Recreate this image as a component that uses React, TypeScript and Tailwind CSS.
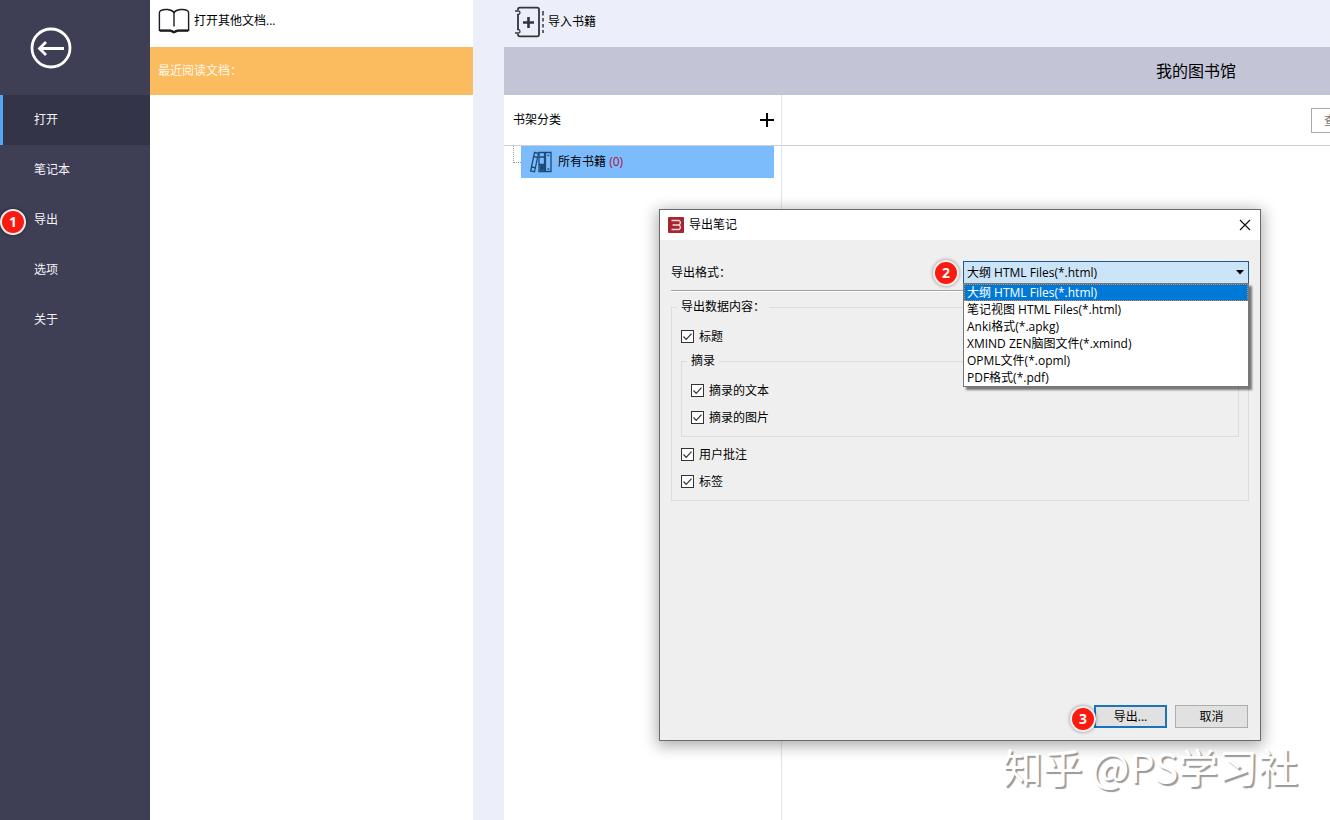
import React, { FC, useState } from "react";
import clsx from "clsx";

interface CheckRowProps {
  id: string;
  label: string;
}

interface StepBadgeProps {
  step: number;
  className: string;
}

const menuItems = ["打开", "笔记本", "导出", "选项", "关于"];

const formats = [
  "大纲 HTML Files(*.html)",
  "笔记视图 HTML Files(*.html)",
  "Anki格式(*.apkg)",
  "XMIND ZEN脑图文件(*.xmind)",
  "OPML文件(*.opml)",
  "PDF格式(*.pdf)",
];

const StepBadge: FC<StepBadgeProps> = ({ step, className }) => (
  <span
    className={clsx(
      "absolute flex h-[26px] w-[26px] items-center justify-center rounded-full border-2 border-[#fbeeee] bg-[#fb1a10] text-sm font-bold text-white shadow-[0_0_3px_1px_rgba(0,0,0,0.25)]",
      className
    )}
  >
    {step}
  </span>
);

const CheckRow: FC<CheckRowProps> = ({ id, label }) => (
  <div className="flex h-[27px] items-center">
    <span className="relative flex">
      <input
        id={id}
        type="checkbox"
        defaultChecked
        className="peer h-[13px] w-[13px] appearance-none border border-[#333] bg-white"
      />
      <svg
        viewBox="0 0 13 13"
        className="pointer-events-none absolute inset-0 hidden h-[13px] w-[13px] peer-checked:block"
        fill="none"
        stroke="#333"
        strokeWidth="1.2"
      >
        <path d="M2.5 6.5l2.7 2.8 5.3-5.6" />
      </svg>
    </span>
    <label htmlFor={id} className="pl-[5px]">
      {label}
    </label>
  </div>
);

const Sidebar: FC = () => {
  const [active, setActive] = useState("打开");
  return (
    <nav className="relative w-[150px] shrink-0 bg-[#3e3e55] text-[#f4f4f8]">
      <div className="flex h-[95px] items-center pl-[30px]">
        <button type="button" aria-label="返回">
          <svg
            width="42"
            height="42"
            viewBox="0 0 42 42"
            fill="none"
            stroke="#fff"
            strokeWidth="2.8"
          >
            <circle cx="21" cy="21" r="19" />
            <path d="M34 21.5H10M16 15l-6.5 6.5L16 28" />
          </svg>
        </button>
      </div>
      {menuItems.map((item) => (
        <button
          key={item}
          type="button"
          onClick={() => setActive(item)}
          className={clsx(
            "flex h-[50px] w-full items-center border-l-[3px] pl-[31px]",
            item === active
              ? "border-[#56a5f7] bg-[#333447]"
              : "border-transparent"
          )}
        >
          {item}
        </button>
      ))}
      <StepBadge step={1} className="left-0 top-[209px]" />
    </nav>
  );
};

const RecentPanel: FC = () => (
  <section className="w-[323px] shrink-0 bg-white">
    <button type="button" className="flex h-[47px] items-center pb-[6px] pl-2">
      <svg
        width="32"
        height="26"
        viewBox="0 0 32 26"
        fill="none"
        stroke="#1c1c1c"
        strokeWidth="1.4"
      >
        <path d="M16 4.5C13.5 1 6 .8 2.6 2.6 1.5 3.2 1.4 4 1.4 5v17.5h10.2c2 0 3 .3 4.4 1.4 1.400-1.100 2.400-1.400 4.400-1.400h10.200V5c0-1-.1-1.800-1.200-2.400C26 .8 18.500 1 16 4.500z" />
        <path d="M16 4.500v14" />
        <path d="M2 22.700h10.500l3.500 1.600 3.500-1.600H30" strokeWidth="2.200" />
      </svg>
      <span className="pl-1">打开其他文档...</span>
    </button>
    <h2 className="flex h-12 items-center bg-[#fbbc60] pl-2 text-[#fff8ea]">
      最近阅读文档：
    </h2>
  </section>
);

const BookshelfTree: FC = () => (
  <aside className="flex w-[278px] shrink-0 flex-col border-r border-[#e4e4e8]">
    <div className="flex h-[51px] items-center justify-between border-b border-[#cfcfd3] pl-[9px] pr-[7px]">
      <h2>书架分类</h2>
      <button type="button" aria-label="添加分类">
        <svg width="14" height="14" viewBox="0 0 14 14" stroke="#000" strokeWidth="2">
          <path d="M7 0v14M0 7h14" />
        </svg>
      </button>
    </div>
    <div className="flex pl-[9px] pr-[7px]">
      <span className="h-[17px] w-2 border-b border-l border-dotted border-[#9a9a9a]" />
      <a href="#all" className="flex h-8 grow items-center bg-[#7dbcfc] pl-[9px]">
        <svg
          width="22"
          height="22"
          viewBox="0 0 22 22"
          fill="none"
          stroke="#1d4a78"
          strokeWidth="1.300"
        >
          <path d="M4.500 1.500l4 .8-4 18.500-3.800-.9z" />
          <path d="M3.800 5.500l3.700.8M1.800 16l3.700.8" />
          <path d="M9 1.500h5.500v19H9zM15.500 1.500H21v19h-5.500z" />
          <path d="M9 6h5.500M9 13.500h5.500M17.500 4.500h1.800M17.500 18h1.800" />
          <path d="M10.300 14.500h3v4.500h-3z" fill="#1d4a78" />
        </svg>
        <span className="pl-[6px]">
          所有书籍 <span className="text-[#b0103c]">(0)</span>
        </span>
      </a>
    </div>
  </aside>
);

const Library: FC = () => (
  <main className="flex min-w-[1384px] grow flex-col">
    <div className="flex h-[47px] items-center pb-1 pl-[10px]">
      <button type="button" className="flex items-center">
        <svg
          width="31"
          height="32"
          viewBox="0 0 31 32"
          fill="none"
          stroke="#33363b"
          strokeWidth="1.800"
        >
          <path d="M4 4V3.500C4 2.400 4.700 1.700 5.800 1.700h17.400c1.100 0 1.800.7 1.800 1.800v25c0 1.100-.7 1.800-1.800 1.800H5.800c-1.100 0-1.800-.7-1.800-1.800V28M4 9v14" />
          <path
            d="M1 5h3.300c1 0 1.700.6 1.700 1.600S5.300 8.500 4.300 8.500H3M1 27h3.300c1 0 1.700-.6 1.700-1.600s-.7-1.900-1.700-1.900H3"
            strokeWidth="1.300"
          />
          <path d="M14.500 11v11M9 16.500h11" strokeWidth="2.600" />
          <path d="M29 5v4.500M29 12v3.500M29 18v3.500M29 24v3" strokeWidth="1.500" />
        </svg>
        <span className="pl-[3px]">导入书籍</span>
      </button>
    </div>
    <h1 className="flex h-12 items-center justify-center bg-[#c3c5d7] pb-px text-base">
      我的图书馆
    </h1>
    <div className="flex grow bg-white">
      <BookshelfTree />
      <div className="grow">
        <div className="flex h-[51px] items-center justify-end border-b border-[#cfcfd3] pr-3">
          <input
            type="search"
            aria-label="查找书籍"
            placeholder="查找"
            className="h-[25px] w-[565px] border border-[#a9a9ad] px-3 placeholder:text-[#777]"
          />
        </div>
      </div>
    </div>
  </main>
);

const ExportDialog: FC = () => {
  const [format, setFormat] = useState(formats[0]);
  return (
    <div
      role="dialog"
      aria-labelledby="export-title"
      className="absolute left-[659px] top-[209px] flex min-h-[532px] w-[602px] flex-col border border-[#6a6a6a] bg-[#efefef] shadow-[0_3px_14px_2px_rgba(0,0,0,0.32)]"
    >
      <header className="flex h-[30px] items-center bg-white pl-2 pr-[9px]">
        <svg width="16" height="16" viewBox="0 0 16 16" fill="none">
          <rect width="16" height="16" rx="1" fill="#a52630" />
          <path
            d="M3.500 3.500h7.500l1.300 1.300v1.700L11 8l1.300 1.500v1.700L11 12.500H3.500M4.500 8H11"
            stroke="#f3d9da"
            strokeWidth="1.300"
          />
        </svg>
        <h2 id="export-title" className="grow pl-[5px]">
          导出笔记
        </h2>
        <button type="button" aria-label="关闭">
          <svg width="12" height="12" viewBox="0 0 12 12" stroke="#111" strokeWidth="1.200">
            <path d="M1 1l10 10M11 1L1 11" />
          </svg>
        </button>
      </header>

      <div className="flex grow flex-col px-[11px] pb-3 pt-[21px]">
        <div className="flex items-center justify-between">
          <label htmlFor="format">导出格式：</label>
          <div className="relative w-[286px]">
            <select
              id="format"
              value={format}
              onChange={(e) => setFormat(e.target.value)}
              className="block h-[23px] w-full appearance-none border border-[#1c5a94] bg-[#cce4f7] px-[3px]"
            >
              {formats.map((name) => (
                <option key={name}>{name}</option>
              ))}
            </select>
            <svg
              width="8"
              height="5"
              viewBox="0 0 8 5"
              className="pointer-events-none absolute right-[5px] top-[9px]"
            >
              <path d="M0 0h8L4 4.500z" fill="#000" />
            </svg>
            <ul
              role="listbox"
              aria-label="导出格式"
              className="absolute left-0 top-[22px] z-10 w-full border border-[#777] bg-white shadow-[3px_3px_2px_rgba(0,0,0,0.5)]"
            >
              {formats.map((name) => (
                <li
                  key={name}
                  role="option"
                  aria-selected={name === format}
                  onClick={() => setFormat(name)}
                  className={clsx(
                    "h-[17px] px-[3px] leading-[17px]",
                    name === format &&
                      "bg-[#0078d7] text-white outline-1 -outline-offset-1 outline-dotted outline-[#d98a3c]"
                  )}
                >
                  {name}
                </li>
              ))}
            </ul>
            <StepBadge step={2} className="-left-[30px] -top-px" />
          </div>
        </div>

        <hr className="mt-[6px] h-[2px] border-b border-t border-b-white border-t-[#a0a0a0]" />

        <fieldset className="mt-[7px] border border-[#dcdcdc] px-[9px] pb-[5px]">
          <legend className="-ml-1 px-1 leading-4">导出数据内容：</legend>
          <div className="pt-2">
            <CheckRow id="title" label="标题" />
          </div>
          <fieldset className="mb-1 mt-[3px] border border-[#dcdcdc] px-[9px] pb-[5px]">
            <legend className="-ml-1 px-1 leading-4">摘录</legend>
            <div className="pt-2">
              <CheckRow id="excerpt-text" label="摘录的文本" />
              <CheckRow id="excerpt-image" label="摘录的图片" />
            </div>
          </fieldset>
          <CheckRow id="notes" label="用户批注" />
          <CheckRow id="tags" label="标签" />
        </fieldset>

        <div className="mt-auto flex justify-end gap-2 pr-px">
          <div className="relative">
            <button
              type="button"
              className="block h-[23px] w-[73px] border-2 border-[#1a74bb] bg-[#e1e1e1]"
            >
              导出...
            </button>
            <StepBadge step={3} className="-left-6 top-px" />
          </div>
          <button
            type="button"
            className="h-[23px] w-[73px] border border-[#adadad] bg-[#e1e1e1]"
          >
            取消
          </button>
        </div>
      </div>
    </div>
  );
};

const App: FC = () => (
  <div className="relative flex min-h-screen overflow-hidden bg-[#eceff9] font-['Open_Sans','Noto_Sans_CJK_SC',sans-serif] text-xs text-black">
    <Sidebar />
    <RecentPanel />
    <div className="w-[31px] shrink-0" />
    <Library />
    <ExportDialog />
    <p className="pointer-events-none absolute bottom-7 right-8 font-['Noto_Sans_CJK_SC',sans-serif] text-[40px] leading-[52px] text-white [text-shadow:2px_2px_1px_#999]">
      知乎 @PS学习社
    </p>
  </div>
);

export default App;
